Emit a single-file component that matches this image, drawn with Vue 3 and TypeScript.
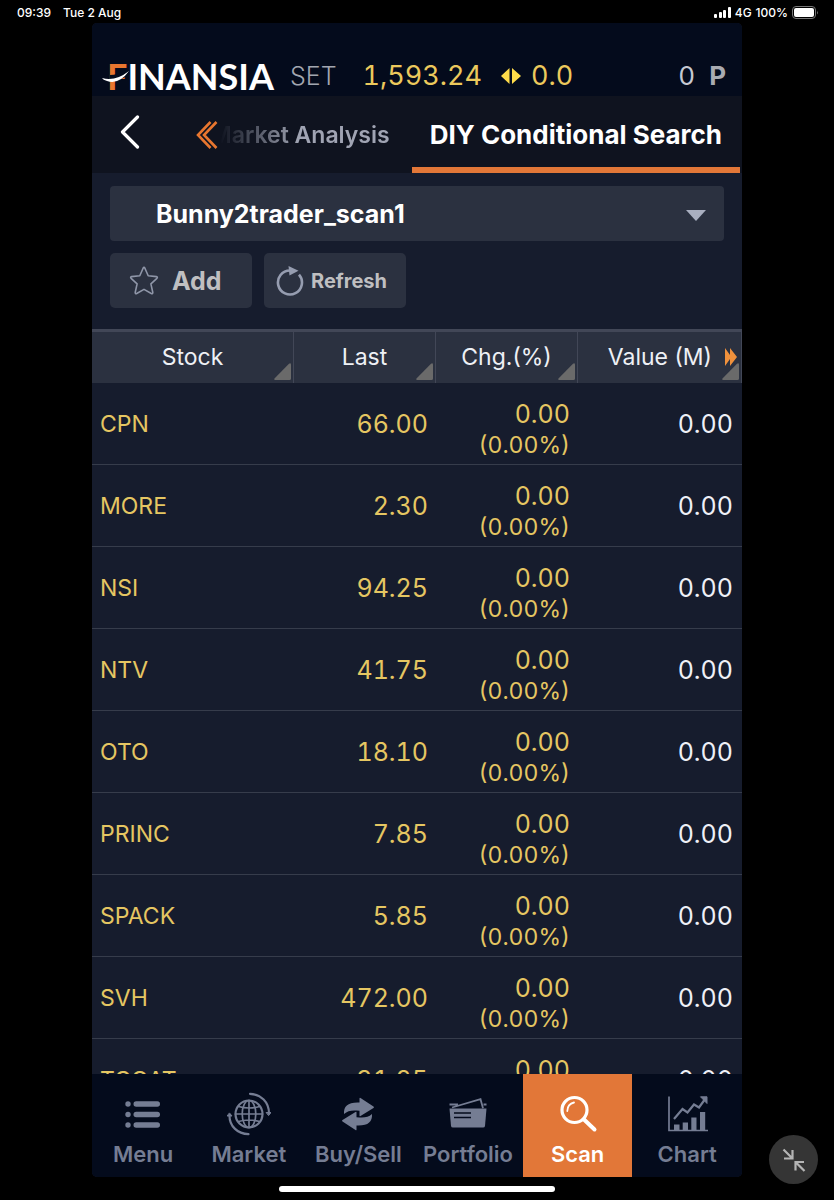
<script setup lang="ts">
import { ref } from 'vue'

interface Row {
  symbol: string
  last: string
  change: string
  percent: string
  value: string
}

const makeRow = (symbol: string, last: string): Row => ({
  symbol,
  last,
  change: '0.00',
  percent: '(0.00%)',
  value: '0.00',
})

const rows: Row[] = [
  makeRow('CPN', '66.00'),
  makeRow('MORE', '2.30'),
  makeRow('NSI', '94.25'),
  makeRow('NTV', '41.75'),
  makeRow('OTO', '18.10'),
  makeRow('PRINC', '7.85'),
  makeRow('SPACK', '5.85'),
  makeRow('SVH', '472.00'),
  makeRow('TCOAT', '31.25'),
]

const columns = ['Stock', 'Last', 'Chg.(%)', 'Value (M)']
const scan = ref('Bunny2trader_scan1')
</script>

<template>
  <div class="screen">
    <header class="status">
      <div class="status-group">
        <span>09:39</span>
        <span>Tue 2 Aug</span>
      </div>
      <div class="status-right">
        <svg width="17" height="11" viewBox="0 0 17 11" fill="#fff" aria-hidden="true">
          <rect x="0" y="7" width="3" height="4" rx="1" />
          <rect x="5" y="5" width="3" height="6" rx="1" />
          <rect x="9" y="3" width="3" height="8" rx="1" />
          <rect x="14" y="0" width="3" height="11" rx="1" />
        </svg>
        <span>4G</span>
        <span>100%</span>
        <svg width="27" height="13" viewBox="0 0 27 13" aria-hidden="true">
          <rect x="0.5" y="0.5" width="23" height="12" rx="3.5" fill="none" stroke="#777" />
          <rect x="2" y="2" width="20" height="9" rx="2" fill="#fff" />
          <path d="M25 4.5q1.6 2 0 4z" fill="#777" />
        </svg>
      </div>
    </header>

    <main class="app">
      <section class="quote">
        <div class="logo">
          <span class="logo-f">F</span><span>INANSIA</span>
          <svg class="swoosh" width="28" height="14" viewBox="0 0 28 14" aria-hidden="true">
            <path d="M8 8Q17 8 26 2" fill="none" stroke="#040b1c" stroke-width="6" />
            <path d="M0 8Q13 12 27 1Q17 15 5 11Q1 10 0 8z" fill="#fff" />
          </svg>
        </div>
        <span class="market">SET</span>
        <span class="index">1,593.24</span>
        <svg class="flat" width="22" height="16" viewBox="0 0 22 16" fill="#ffdc4a" aria-hidden="true">
          <path d="M9.500 0v16L1 8zM12 0v16l9-8z" />
        </svg>
        <span class="diff">0.0</span>
        <span class="points">0</span>
        <strong class="unit">P</strong>
      </section>

      <nav class="tabs" aria-label="Scan sections">
        <button class="back" aria-label="Back">
          <svg width="20" height="34" viewBox="0 0 20 34" fill="none" stroke="#fff" stroke-width="3.2" stroke-linecap="round" stroke-linejoin="round">
            <path d="M17.500 2L2.500 17l15 15" />
          </svg>
        </button>
        <button class="more" aria-label="Previous tabs">
          <svg width="22" height="28" viewBox="0 0 22 28" fill="none" stroke="#e8762f" stroke-width="2.600">
            <path d="M14.500 1L2 14l12.500 13M20.500 1L8 14l12.500 13" />
          </svg>
        </button>
        <a class="tab faded" href="#market-analysis"><span>Market Analysis</span></a>
        <a class="tab active" href="#search" aria-current="page">DIY Conditional Search</a>
      </nav>

      <section class="controls">
        <div class="picker">
          <select v-model="scan" aria-label="Saved scan">
            <option>Bunny2trader_scan1</option>
          </select>
          <svg class="caret" width="20" height="11" viewBox="0 0 20 11" fill="#a9afc0" aria-hidden="true">
            <path d="M0 0h20L10 11z" />
          </svg>
        </div>
        <div class="actions">
          <button class="action add">
            <svg width="30" height="30" viewBox="0 0 30 30" fill="none" stroke="#8f96a8" stroke-width="1.600" stroke-linejoin="round" aria-hidden="true">
              <path d="M14.100 2.200q.9-1.600 1.800 0l3.300 7.600 8.200.8q1.600.4.500 1.700l-6 5.500 1.900 8.700q0 1.700-1.500 1L15 23.400l-7.300 4.100q-1.500.7-1.500-1l1.900-8.700-6-5.500q-1.100-1.300.5-1.700l8.200-.8z" />
            </svg>
            <span>Add</span>
          </button>
          <button class="action refresh">
            <svg width="28" height="30" viewBox="0 0 28 30" aria-hidden="true">
              <path d="M23 8.600A12 12 0 1 1 14 4.500" fill="none" stroke="#969db0" stroke-width="2.600" />
              <path d="M12.500 0L22.500 4.800 13.500 9.500z" fill="#969db0" />
            </svg>
            <span>Refresh</span>
          </button>
        </div>
      </section>

      <section class="results">
        <table>
          <colgroup>
            <col class="col-stock" />
            <col class="col-mid" />
            <col class="col-mid" />
            <col />
          </colgroup>
          <thead>
            <tr>
              <th v-for="(name, i) in columns" :key="name" scope="col">
                <div class="head">
                  <span>{{ name }}</span>
                  <svg v-if="i === 3" width="12" height="18" viewBox="0 0 12 18" fill="#f0913c" aria-hidden="true">
                    <path d="M0 0l5 7V0l7 9-7 9v-7l-5 7z" />
                  </svg>
                </div>
                <svg class="sort" width="17" height="17" viewBox="0 0 17 17" fill="#6a6a6a" aria-hidden="true">
                  <path d="M15 .8q1.500-1.200 2 .4V15.500q0 1.500-1.500 1.500H1.200Q-.5 16.700.7 15.200z" />
                </svg>
              </th>
            </tr>
          </thead>
          <tbody>
            <tr v-for="row in rows" :key="row.symbol">
              <td class="symbol">{{ row.symbol }}</td>
              <td>{{ row.last }}</td>
              <td class="change">
                <div>{{ row.change }}</div>
                <div class="percent">{{ row.percent }}</div>
              </td>
              <td class="value">{{ row.value }}</td>
            </tr>
          </tbody>
        </table>
      </section>

      <nav class="dock" aria-label="Main">
        <a href="#menu">
          <svg width="44" height="44" viewBox="0 0 44 44" fill="#757d93" aria-hidden="true">
            <circle cx="7" cy="12" r="2.700" /><circle cx="7" cy="22.500" r="2.700" /><circle cx="7" cy="33" r="2.700" />
            <rect x="12.500" y="9.300" width="26.500" height="5.400" rx="2.700" />
            <rect x="12.500" y="19.800" width="26.500" height="5.400" rx="2.700" />
            <rect x="12.500" y="30.300" width="26.500" height="5.400" rx="2.700" />
          </svg>
          <span>Menu</span>
        </a>
        <a href="#market">
          <svg width="44" height="44" viewBox="0 0 44 44" fill="none" stroke="#757d93" stroke-width="1.700" stroke-linecap="round" aria-hidden="true">
            <circle cx="22" cy="22" r="13.500" stroke-width="2.200" />
            <ellipse cx="22" cy="22" rx="6.800" ry="13.500" />
            <path d="M22 8.500v27M8.500 22h27M11.500 14.500Q22 17.500 32.500 14.500M11.500 29.500Q22 26.500 32.500 29.500" />
            <path d="M23 1.800C34 2.500 42 10 42 21.500M21.500 42.200C10.500 42 2.200 34 2.500 23" stroke-width="2.200" />
            <path d="M39.500 20.500h4.500l-2.200 2.800zM.5 24h4.500l-2.300-2.800z" fill="#757d93" stroke-width="1" />
          </svg>
          <span>Market</span>
        </a>
        <a href="#trade">
          <svg width="44" height="44" viewBox="0 0 44 44" fill="#757d93" aria-hidden="true">
            <path d="M8 22C7.500 14 12 10 23.500 10.500V6.300q.2-1 1-.4L37.500 14.500q1 .8 0 1.500L24.500 24q-1 .5-1-.4V18.800C16 18 12 18.500 8 22z" />
            <path d="M36 22C36.500 30 32 34 20.500 33.500V37.700q-.2 1-1 .4L6.500 29.500q-1-.8 0-1.500L19.500 20q1-.5 1 .4V25.200C28 26 32 25.500 36 22z" />
          </svg>
          <span>Buy/Sell</span>
        </a>
        <a href="#portfolio">
          <svg width="44" height="44" viewBox="0 0 44 44" aria-hidden="true">
            <path d="M3.500 16.500h37L39 34q-.2 1.500-2 1.500H7Q5.200 35.500 5 34z" fill="#757d93" />
            <path d="M3.500 12.500H12M6 15.500L34.500 7.200l2.500 9M37.500 12.500h3" fill="none" stroke="#757d93" stroke-width="1.800" />
            <path d="M8 21h17M8 25.500h17" stroke="#040b1c" stroke-width="1.600" />
          </svg>
          <span>Portfolio</span>
        </a>
        <a class="current" href="#scan" aria-current="page">
          <svg width="44" height="44" viewBox="0 0 44 44" fill="none" stroke="#fff" stroke-linecap="round" aria-hidden="true">
            <circle cx="18.500" cy="18" r="12.500" stroke-width="3.200" />
            <path d="M28 27.500L38.500 37.500" stroke-width="4" />
            <path d="M11.300 19Q11.500 12 18 10.500" stroke-width="1.800" />
          </svg>
          <span>Scan</span>
        </a>
        <a href="#chart">
          <svg width="44" height="44" viewBox="0 0 44 44" fill="none" stroke="#757d93" stroke-width="1.700" aria-hidden="true">
            <path d="M4 4.500V38.500H43" />
            <path d="M9 27L17.500 17l5 3.500L29 12.500l5 3L40.500 6.500" stroke-width="2.200" />
            <path d="M35.500 4.800H42V11.500z" fill="#757d93" stroke-width="1" />
            <path d="M9 32.500h5.500V38H9zM17.700 30.500h5.300V38h-5.300zM26.300 25.500h5.200V38h-5.200zM35 20h5.200v18H35z" fill="#757d93" stroke="none" />
          </svg>
          <span>Chart</span>
        </a>
      </nav>
    </main>

    <footer class="home"><span class="home-bar"></span></footer>

    <button class="shrink" aria-label="Exit full size">
      <svg width="24" height="24" viewBox="0 0 24 24" fill="none" stroke="#b4b4b4" stroke-width="2.200" aria-hidden="true">
        <path d="M1.500 1.500L10 10M2 10.500h8.500V2M22.500 23L14 14.500M22 14h-8.500v8.500" />
      </svg>
    </button>
  </div>
</template>

<style>
html,
body {
  background: #000;
}
</style>

<style scoped>
.screen {
  box-sizing: border-box;
  display: flex;
  flex-direction: column;
  height: 100vh;
  background: #000;
  color: #fff;
  font-family: Inter, "Liberation Sans", sans-serif;
}
.screen *,
.screen *::before {
  box-sizing: border-box;
}
button,
select {
  border: 0;
  padding: 0;
  background: none;
  color: inherit;
  font: inherit;
}
a {
  color: inherit;
  text-decoration: none;
}
svg {
  display: block;
  flex: none;
}
.status {
  display: flex;
  justify-content: space-between;
  align-items: center;
  height: 23px;
  padding: 2px 15px 0 17px;
  font-size: 12px;
  font-weight: 500;
}
.status-group {
  display: flex;
  gap: 12px;
}
.status-right {
  display: flex;
  align-items: center;
  gap: 4px;
}
.app {
  display: flex;
  flex: 1;
  flex-direction: column;
  min-height: 0;
  margin: 0 92px;
  overflow: hidden;
  border-radius: 5px;
  background: #161c2d;
}
.quote {
  display: flex;
  align-items: center;
  height: 73px;
  padding: 33px 16px 0 15px;
  background: #040b1c;
  font-size: 27px;
  font-variant-numeric: tabular-nums;
  line-height: 40px;
}
.logo {
  position: relative;
  display: flex;
  font-family: Lato, sans-serif;
  font-size: 36px;
  font-weight: 700;
}
.logo-f {
  color: #e8762f;
}
.swoosh {
  position: absolute;
  left: -5px;
  top: 14px;
}
.market {
  margin-left: 16px;
  color: #a2a6b0;
  font-size: 25px;
  font-weight: 300;
}
.index {
  margin-left: 26px;
  color: #ecc95c;
}
.flat {
  margin: 0 9px 0 18px;
}
.diff {
  color: #ecc95c;
}
.points {
  margin-left: auto;
  color: #c6c9d2;
  font-size: 26px;
}
.unit {
  margin-left: 14px;
  color: #a9abb1;
  font-size: 26px;
}
.tabs {
  display: flex;
  align-items: stretch;
  height: 77px;
  padding-right: 2px;
  background: #0f131f;
}
.back {
  display: flex;
  align-items: center;
  padding: 0 28px 5px;
}
.more {
  display: flex;
  align-items: center;
  margin-left: 28px;
}
.tab {
  display: flex;
  align-items: center;
  border-bottom: 6px solid transparent;
  padding-top: 6px;
  font-weight: 700;
  white-space: nowrap;
}
.faded {
  flex: 1;
  justify-content: flex-end;
  min-width: 0;
  padding-right: 22px;
  overflow: hidden;
  color: #a0a4b3;
  font-size: 23px;
  font-weight: 600;
  mask-image: linear-gradient(90deg, transparent 2px, #000 80px);
}
.active {
  padding-right: 18px;
  padding-left: 18px;
  border-color: #e27738;
  font-size: 26px;
}
.controls {
  padding: 13px 18px 21px;
}
.picker {
  position: relative;
}
.picker select {
  width: 100%;
  height: 55px;
  padding: 0 46px;
  appearance: none;
  border-radius: 4px;
  background: #2b3140;
  font-size: 25px;
  font-weight: 700;
}
.caret {
  position: absolute;
  top: 24px;
  right: 18px;
}
.actions {
  display: flex;
  gap: 12px;
  margin-top: 12px;
}
.action {
  display: flex;
  align-items: center;
  width: 142px;
  height: 55px;
  border-radius: 5px;
  background: #2b3140;
  color: #bfbfc1;
  font-weight: 700;
}
.add {
  gap: 13px;
  padding-left: 19px;
  font-size: 25px;
}
.refresh {
  gap: 7px;
  padding-left: 12px;
  font-size: 20px;
}
.results {
  flex: 1;
  min-height: 0;
  overflow: hidden;
}
table {
  width: 100%;
  table-layout: fixed;
  border-collapse: separate;
  border-spacing: 0;
}
.col-stock {
  width: 202px;
}
.col-mid {
  width: 142px;
}
th {
  position: relative;
  height: 54px;
  padding: 0 0 2px;
  border-top: 3px solid #424757;
  border-right: 1px solid #424757;
  background: #2b3140;
  color: #eef0f5;
  font-size: 23px;
  font-weight: 400;
}
.head {
  display: flex;
  align-items: center;
  justify-content: center;
  gap: 13px;
}
th:last-child .head {
  justify-content: flex-end;
  padding-right: 4px;
}
.sort {
  position: absolute;
  right: 2px;
  bottom: 3px;
}
td {
  height: 82px;
  padding: 2px 8px 0;
  border-bottom: 1px solid #363c4b;
  color: #e5c662;
  font-size: 25px;
  font-variant-numeric: tabular-nums;
  line-height: 31px;
  text-align: right;
}
.symbol {
  font-size: 23px;
  text-align: left;
}
.change {
  padding-top: 15px;
  padding-bottom: 3px;
}
.percent {
  font-size: 23px;
}
.value {
  color: #eef0f7;
  padding-right: 9px;
}
.dock {
  display: grid;
  grid-template-columns: 102px repeat(5, 1fr);
  height: 103px;
  background: #040b1c;
}
.dock a {
  display: flex;
  flex-direction: column;
  align-items: center;
  gap: 3px;
  padding-top: 18px;
  color: #757d93;
  font-size: 22px;
  font-weight: 600;
  line-height: 30px;
}
.dock .current {
  background: #e27738;
  color: #fff;
}
.home {
  display: flex;
  justify-content: center;
  height: 23px;
  padding-top: 9px;
}
.home-bar {
  width: 33%;
  height: 6px;
  border-radius: 3px;
  background: #fff;
}
.shrink {
  position: absolute;
  right: 16px;
  bottom: 16px;
  display: grid;
  place-items: center;
  width: 49px;
  height: 49px;
  border-radius: 50%;
  background: #353535;
}
</style>
